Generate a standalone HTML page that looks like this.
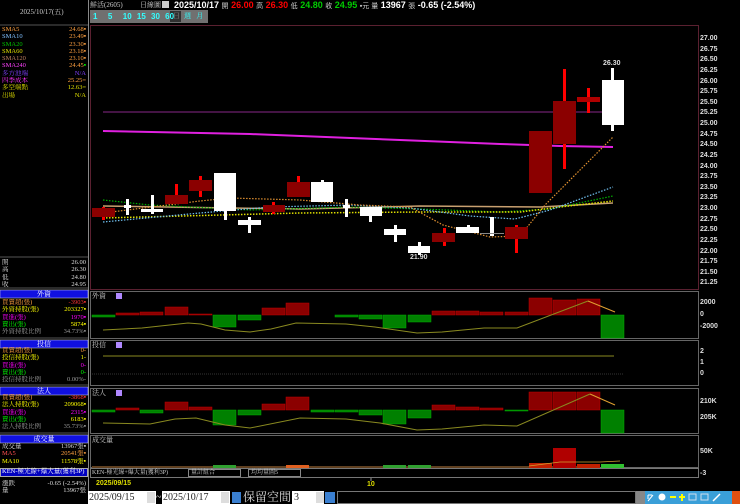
<!DOCTYPE html>
<html><head><meta charset="utf-8"><style>
*{margin:0;padding:0;box-sizing:border-box}
body{width:740px;height:504px;background:#000;overflow:hidden;position:relative;font-family:"Liberation Sans","Noto Sans CJK TC",sans-serif;}
.t{position:absolute;white-space:nowrap;font-size:7px;line-height:8px;font-family:"Liberation Serif","Noto Serif CJK SC",serif}
.L{position:absolute;left:2px;width:84px;font-family:"Liberation Serif","Noto Serif CJK SC",serif}
.L div{height:7.3px;line-height:7.3px;font-size:6.5px;overflow:hidden;white-space:nowrap}
</style></head><body>
<svg width="740" height="504" style="position:absolute;left:0;top:0" xmlns="http://www.w3.org/2000/svg">
<line x1="88.5" y1="0" x2="88.5" y2="504" stroke="#888" />
<line x1="0" y1="25" x2="88" y2="25" stroke="#555"/>
<rect x="90.5" y="25.5" width="608" height="264" fill="none" stroke="#5a2030"/>
<rect x="90" y="10" width="118" height="13" fill="#707070"/>
<rect x="170" y="11" width="11" height="11" fill="#303030"/>
<line x1="103" y1="112" x2="612" y2="112" stroke="#5a1a5a" stroke-width="1.5"/>
<polyline points="103,131 250,134 400,140 500,144 560,146 613,147" fill="none" stroke="#e020e0" stroke-width="2"/>
<polyline points="103,206 300,209 420,206 540,207 613,203" fill="none" stroke="#c8a070" stroke-width="1.5"/>
<polyline points="103,200 150,205 250,210 350,207 420,209 500,212 550,209 613,196" fill="none" stroke="#00b000" stroke-width="1.2" stroke-dasharray="1.5,1.5"/>
<polyline points="103,218 300,213 420,212 520,212 560,207 613,201" fill="none" stroke="#e0e000" stroke-width="1.5" stroke-dasharray="1.5,1.5"/>
<polyline points="103,222 200,213 270,207 350,205 410,208 470,216 515,219 550,210 613,187" fill="none" stroke="#70c0f0" stroke-width="1.2" stroke-dasharray="1.5,1.5"/>
<polyline points="103,213 200,201 230,198 300,200 360,205 410,207 443,225 490,237 520,236 545,205 613,137" fill="none" stroke="#e09030" stroke-width="1.2" stroke-dasharray="1.5,1.5"/>
<g fill="#8b0000">
<rect x="102" y="207" width="3" height="13" fill="#f00"/><rect x="92" y="208" width="23" height="9"/>
<rect x="175" y="184" width="3" height="13" fill="#f00"/><rect x="165" y="195" width="23" height="9"/>
<rect x="199" y="176" width="3" height="21" fill="#f00"/><rect x="189" y="180" width="23" height="11"/>
<rect x="272" y="202" width="3" height="12" fill="#f00"/><rect x="263" y="205" width="22" height="7"/>
<rect x="297" y="176" width="3" height="21" fill="#f00"/><rect x="287" y="182" width="23" height="15"/>
<rect x="443" y="228" width="3" height="18" fill="#f00"/><rect x="432" y="233" width="23" height="9"/>
<rect x="515" y="225" width="3" height="28" fill="#f00"/><rect x="505" y="227" width="23" height="12"/>
<rect x="529" y="131" width="23" height="62"/>
<rect x="563" y="69" width="3" height="100" fill="#f00"/><rect x="553" y="101" width="23" height="43"/>
<rect x="587" y="88" width="3" height="25" fill="#f00"/><rect x="577" y="97" width="23" height="5" fill="#b00000"/>
</g>
<g fill="#fff">
<rect x="126" y="199" width="3" height="16"/><rect x="124" y="205" width="7" height="3"/>
<rect x="151" y="195" width="3" height="19"/><rect x="141" y="209" width="22" height="3"/>
<rect x="214" y="173" width="22" height="38"/><rect x="224" y="211" width="3" height="9"/>
<rect x="248" y="217" width="3" height="16"/><rect x="238" y="220" width="23" height="5"/>
<rect x="321" y="180" width="3" height="3"/><rect x="311" y="182" width="22" height="20"/>
<rect x="345" y="199" width="3" height="18"/><rect x="343" y="205" width="7" height="3"/>
<rect x="360" y="207" width="22" height="9"/><rect x="369" y="216" width="3" height="6"/>
<rect x="394" y="225" width="3" height="17"/><rect x="384" y="229" width="22" height="6"/>
<rect x="418" y="242" width="3" height="13"/><rect x="408" y="246" width="22" height="7"/>
<rect x="467" y="225" width="3" height="8"/><rect x="456" y="227" width="23" height="6"/>
<rect x="490" y="217" width="4" height="19"/><rect x="480" y="233" width="24" height="1" fill="#888"/>
<rect x="611" y="68" width="3" height="63"/><rect x="602" y="80" width="22" height="45"/>
</g>
<g fill="none" stroke="#666">
<rect x="90.5" y="291.5" width="608" height="47"/>
<rect x="90.5" y="340.5" width="608" height="45"/>
<rect x="90.5" y="388.5" width="608" height="45"/>
<rect x="90.5" y="435.5" width="608" height="32"/>
</g>
<g fill="#b088ff"><rect x="116" y="293" width="6" height="6"/><rect x="116" y="342" width="6" height="6"/><rect x="116" y="390" width="6" height="6"/></g>
<g fill="#8b0000" stroke="#c00000" stroke-width="0.5">
<rect x="116" y="313" width="23" height="2"/><rect x="140" y="312" width="23" height="3"/><rect x="165" y="307" width="23" height="8"/><rect x="189" y="314" width="23" height="1"/>
<rect x="262" y="308" width="23" height="7"/><rect x="286" y="303" width="23" height="12"/>
<rect x="432" y="311" width="23" height="4"/><rect x="456" y="311" width="23" height="4"/><rect x="480" y="312" width="23" height="3"/><rect x="505" y="312" width="23" height="3"/>
<rect x="529" y="298" width="23" height="17"/><rect x="553" y="300" width="23" height="15"/><rect x="577" y="299" width="23" height="16"/>
</g>
<g fill="#008000" stroke="#00b000" stroke-width="0.5">
<rect x="92" y="315" width="23" height="2"/><rect x="213" y="315" width="23" height="12"/><rect x="238" y="315" width="23" height="5"/>
<rect x="335" y="315" width="23" height="2"/><rect x="359" y="315" width="23" height="4"/><rect x="383" y="315" width="23" height="13"/><rect x="408" y="315" width="23" height="7"/>
<rect x="601" y="315" width="23" height="23"/>
</g>
<polyline points="103,330 142,328 188,323 201,324 225,330 250,332 271,329 296,323 346,324 375,327 417,333 442,332 484,328 517,328 588,301" fill="none" stroke="#8a8a20" stroke-width="1"/>
<polyline points="588,301 615,312" fill="none" stroke="#e0a030" stroke-width="1"/>
<line x1="103" y1="356" x2="614" y2="356" stroke="#8a8a20"/>
<line x1="92" y1="374" x2="624" y2="374" stroke="#333" stroke-dasharray="1,1"/>
<g fill="#8b0000" stroke="#c00000" stroke-width="0.5">
<rect x="116" y="408" width="23" height="2"/><rect x="165" y="402" width="23" height="8"/><rect x="189" y="407" width="23" height="3"/>
<rect x="262" y="404" width="23" height="6"/><rect x="286" y="397" width="23" height="13"/>
<rect x="432" y="405" width="23" height="5"/><rect x="456" y="407" width="23" height="3"/><rect x="480" y="408" width="23" height="2"/>
<rect x="529" y="392" width="23" height="18"/><rect x="553" y="392" width="23" height="18"/><rect x="577" y="392" width="23" height="18"/>
</g>
<g fill="#008000" stroke="#00b000" stroke-width="0.5">
<rect x="92" y="410" width="23" height="2"/><rect x="140" y="410" width="23" height="3"/><rect x="213" y="410" width="23" height="15"/><rect x="238" y="410" width="23" height="5"/>
<rect x="311" y="410" width="23" height="2"/><rect x="335" y="410" width="23" height="2"/><rect x="359" y="410" width="23" height="5"/><rect x="383" y="410" width="23" height="14"/><rect x="408" y="410" width="23" height="8"/>
<rect x="505" y="410" width="23" height="1"/><rect x="601" y="410" width="23" height="23"/>
</g>
<polyline points="103,423 150,424 175,419 196,418 225,425 250,428 300,418 346,419 380,423 417,430 442,429 484,425 517,426 590,394" fill="none" stroke="#8a8a20"/>
<polyline points="590,394 615,405" fill="none" stroke="#e0a030"/>
<g>
<rect x="92" y="466" width="508" height="2" fill="#604020"/>
<rect x="213" y="465" width="23" height="3" fill="#30a030"/><rect x="286" y="465" width="23" height="3" fill="#e06020"/><rect x="383" y="465" width="23" height="3" fill="#30a030"/><rect x="408" y="465" width="23" height="3" fill="#30a030"/>
<rect x="529" y="463" width="23" height="5" fill="#c02000"/><rect x="553" y="448" width="23" height="20" fill="#b00000"/><rect x="577" y="464" width="23" height="4" fill="#c02000"/><rect x="601" y="464" width="23" height="4" fill="#30c030"/>
<polyline points="529,466 560,462 600,462 620,461" fill="none" stroke="#d0a030" stroke-width="0.8"/>
</g>
<rect x="90.5" y="468.5" width="608" height="9" fill="#000" stroke="#777"/>
<rect x="0.5" y="468.5" width="87" height="8" fill="#0000c0" stroke="#aaa"/>
<rect x="188.5" y="469.5" width="52" height="7" fill="#000" stroke="#888"/>
<rect x="248.5" y="469.5" width="52" height="7" fill="#000" stroke="#888"/>
<line x1="371" y1="478" x2="371" y2="481" stroke="#999"/>
<rect x="88" y="491" width="68" height="13" fill="#fff"/><rect x="147" y="492" width="8" height="11" fill="#ddd"/>
<rect x="162" y="491" width="68" height="13" fill="#fff"/><rect x="221" y="492" width="8" height="11" fill="#ddd"/>
<rect x="232" y="492" width="9" height="11" fill="#3a7fd0"/>
<rect x="292" y="491" width="32" height="13" fill="#fff"/><rect x="316" y="492" width="8" height="11" fill="#ddd"/>
<rect x="325" y="492" width="10" height="11" fill="#3a7fd0"/>
<rect x="337.5" y="491.5" width="298" height="12" fill="#000" stroke="#777"/>
<rect x="636" y="491" width="9" height="13" fill="#888"/>
<rect x="645" y="491" width="87" height="13" fill="#3a9fd8"/>
<rect x="732" y="491" width="8" height="13" fill="#e05010"/>
<path d="M648,501 L653,495 M648,495 L648,499 M648,495 L652,495" stroke="#fff" stroke-width="1" fill="none"/>
<circle cx="662" cy="497" r="3.5" fill="#fff"/><rect x="670" y="496" width="6" height="2" fill="#ff0"/><rect x="681" y="494" width="2" height="7" fill="#ff0"/><rect x="679" y="496" width="6" height="2" fill="#ff0"/>
<rect x="689" y="494" width="7" height="6" fill="none" stroke="#cde" stroke-width="1"/>
<rect x="701" y="494" width="7" height="6" fill="none" stroke="#cde" stroke-width="1"/>
<path d="M713,501 L720,494" stroke="#fff" stroke-width="1.5"/>
<g fill="#1010e0" stroke="#ddd" stroke-width="0.5">
<rect x="0" y="290" width="88" height="8"/><rect x="0" y="340" width="88" height="8"/><rect x="0" y="387" width="88" height="8"/><rect x="0" y="435" width="88" height="8"/>
</g>
<g stroke="#555"><line x1="0" y1="288" x2="88" y2="288"/><line x1="0" y1="338" x2="88" y2="338"/><line x1="0" y1="385" x2="88" y2="385"/><line x1="0" y1="433" x2="88" y2="433"/><line x1="0" y1="257" x2="88" y2="257"/></g>
</svg>

<div class="t" style="left:90px;top:1px;color:#ccc">鮮活(2605)</div>
<div class="t" style="left:140px;top:1px;color:#ccc">日線圖</div>
<div class="t" style="left:162px;top:1px;width:7px;height:7px;background:#ccc"></div>
<div class="t" style="left:174px;top:0px;color:#fff;font:bold 9px 'Liberation Sans',sans-serif">2025/10/17 <span style="font-size:7px;color:#ccc;font-weight:normal">開</span> <span style="color:#f00">26.00</span> <span style="font-size:7px;color:#ccc;font-weight:normal">高</span> <span style="color:#f00">26.30</span> <span style="font-size:7px;color:#ccc;font-weight:normal">低</span> <span style="color:#0c0">24.80</span> <span style="font-size:7px;color:#ccc;font-weight:normal">收</span> <span style="color:#0c0">24.95</span> <span style="font-size:7px;color:#ccc;font-weight:normal">▪元 量</span> 13967 <span style="font-size:7px;color:#ccc;font-weight:normal">張</span> -0.65 (-2.54%)</div>
<div class="t" style="left:93px;top:12px;color:#3ff;font:bold 8px 'Liberation Sans',sans-serif;word-spacing:3px">1 &nbsp;5 &nbsp;10 15 30 60</div>
<div class="t" style="left:173px;top:12px;color:#888">日</div>
<div class="t" style="left:184px;top:12px;color:#3ff">週 &nbsp;&nbsp;月</div>

<div class="t" style="left:20px;top:8px;color:#ccc">2025/10/17(五)</div>
<div class="L" style="top:26px">
<div style="color:#ffa040">SMA5<span style="float:right">24.68▪</span></div>
<div style="color:#80c0ff">SMA10<span style="float:right;color:#ffa040">23.49▪</span></div>
<div style="color:#00c000">SMA20<span style="float:right;color:#ffa040">23.30▪</span></div>
<div style="color:#e0e000">SMA60<span style="float:right;color:#ffa040">23.18▪</span></div>
<div style="color:#c08060">SMA120<span style="float:right;color:#ffa040">23.10▪</span></div>
<div style="color:#ff40ff">SMA240<span style="float:right;color:#ffa040">24.45<span style="color:#0f0">▪</span></span></div>
<div style="color:#8040ff">多方池端<span style="float:right">N/A</span></div>
<div style="color:#ff30ff">四季成本<span style="float:right;color:#ffa040">25.25=</span></div>
<div style="color:#e0e000">多空端點<span style="float:right">12.63=</span></div>
<div style="color:#e0e000">出場<span style="float:right">N/A</span></div>
</div>
<div class="L" style="top:259px;color:#ddd">
<div>開<span style="float:right">26.00</span></div><div>高<span style="float:right">26.30</span></div><div>低<span style="float:right">24.80</span></div><div>收<span style="float:right">24.95</span></div>
</div>
<div class="t" style="left:0;top:290px;width:88px;text-align:center;color:#fff">外資</div>
<div class="L" style="top:299px">
<div style="color:#ffa040">買賣超(張)<span style="float:right;color:#f33">-3903▪</span></div>
<div style="color:#ff0">外資持股(張)<span style="float:right">203327▪</span></div>
<div style="color:#f0f">買進(張)<span style="float:right">1970▪</span></div>
<div style="color:#0f0">賣出(張)<span style="float:right;color:#ff0">5874▪</span></div>
<div style="color:#999">外資持股比例<span style="float:right">34.73%▪</span></div>
</div>
<div class="t" style="left:0;top:340px;width:88px;text-align:center;color:#fff">投信</div>
<div class="L" style="top:347px">
<div style="color:#ffa040">買賣超(張)<span style="float:right">0-</span></div>
<div style="color:#ff0">投信持股(張)<span style="float:right">1-</span></div>
<div style="color:#f0f">買進(張)<span style="float:right">0-</span></div>
<div style="color:#0f0">賣出(張)<span style="float:right">0-</span></div>
<div style="color:#999">投信持股比例<span style="float:right">0.00%-</span></div>
</div>
<div class="t" style="left:0;top:387px;width:88px;text-align:center;color:#fff">法人</div>
<div class="L" style="top:394px">
<div style="color:#ffa040">買賣超(張)<span style="float:right;color:#f33">-3868▪</span></div>
<div style="color:#ff0">法人持股(張)<span style="float:right">209068▪</span></div>
<div style="color:#f0f">買進(張)<span style="float:right">2315▪</span></div>
<div style="color:#0f0">賣出(張)<span style="float:right;color:#ff0">6183▪</span></div>
<div style="color:#999">法人持股比例<span style="float:right">35.73%▪</span></div>
</div>
<div class="t" style="left:0;top:435px;width:88px;text-align:center;color:#fff">成交量</div>
<div class="L" style="top:443px">
<div style="color:#ddd">成交量<span style="float:right">13967張▪</span></div>
<div style="color:#ff5050">MA5<span style="float:right;color:#ffa040">20541張▪</span></div>
<div style="color:#ff0">MA10<span style="float:right">11578張▪</span></div>
</div>
<div class="t" style="left:2px;top:468px;color:#fff;font-size:6.5px">KEN-極光線+爆大量(獲利3P)</div>
<div class="L" style="top:480px;color:#ddd">
<div>漲跌<span style="float:right">-0.65 (-2.54%)</span></div><div>量<span style="float:right">13967張</span></div>
</div>

<div style="position:absolute;left:700px;top:34px;font:bold 7px/10.62px 'Liberation Sans',sans-serif;color:#ddd">27.00<br>26.75<br>26.50<br>26.25<br>26.00<br>25.75<br>25.50<br>25.25<br>25.00<br>24.75<br>24.50<br>24.25<br>24.00<br>23.75<br>23.50<br>23.25<br>23.00<br>22.75<br>22.50<br>22.25<br>22.00<br>21.75<br>21.50<br>21.25</div>
<div class="t" style="left:603px;top:60px;color:#ddd;font:bold 7px 'Liberation Sans',sans-serif">26.30</div>
<div class="t" style="left:410px;top:254px;color:#ddd;font:bold 7px 'Liberation Sans',sans-serif">21.90</div>
<div style="position:absolute;left:700px;font:bold 7px 'Liberation Sans',sans-serif;color:#ddd">
<div style="position:absolute;top:299px">2000</div><div style="position:absolute;top:311px">0</div><div style="position:absolute;top:323px">-2000</div>
<div style="position:absolute;top:348px">2</div><div style="position:absolute;top:359px">1</div><div style="position:absolute;top:370px">0</div>
<div style="position:absolute;top:398px">210K</div><div style="position:absolute;top:414px">205K</div>
<div style="position:absolute;top:448px">50K</div><div style="position:absolute;top:470px">-3</div>
</div>
<div class="t" style="left:92px;top:292px;color:#ccc">外資</div>
<div class="t" style="left:92px;top:341px;color:#ccc">投信</div>
<div class="t" style="left:92px;top:389px;color:#ccc">法人</div>
<div class="t" style="left:92px;top:436px;color:#ccc">成交量</div>
<div class="t" style="left:92px;top:469px;color:#ccc;font-size:6px">KEN-極光線+爆大量(獲利3P)</div>
<div class="t" style="left:191px;top:469px;color:#ccc;font-size:6px">量計組合</div>
<div class="t" style="left:251px;top:469px;color:#ccc;font-size:6px">均均量圖5</div>
<div class="t" style="left:96px;top:480px;color:#dd0;font:bold 7px 'Liberation Sans',sans-serif">2025/09/15</div>
<div class="t" style="left:367px;top:481px;color:#dd0;font:bold 7px 'Liberation Sans',sans-serif">10</div>
<div class="t" style="left:89px;top:492px;color:#222;font:10px/12px 'Liberation Serif',serif">2025/09/15</div>
<div class="t" style="left:156px;top:492px;color:#ddd;font:10px/12px 'Liberation Serif',serif">~</div>
<div class="t" style="left:163px;top:492px;color:#222;font:10px/12px 'Liberation Serif',serif">2025/10/17</div>
<div class="t" style="left:243px;top:490px;color:#ddd;font:12px/14px 'Liberation Serif','Noto Serif CJK SC',serif">保留空間</div>
<div class="t" style="left:294px;top:492px;color:#222;font:10px/12px 'Liberation Serif',serif">3</div>
</body></html>
